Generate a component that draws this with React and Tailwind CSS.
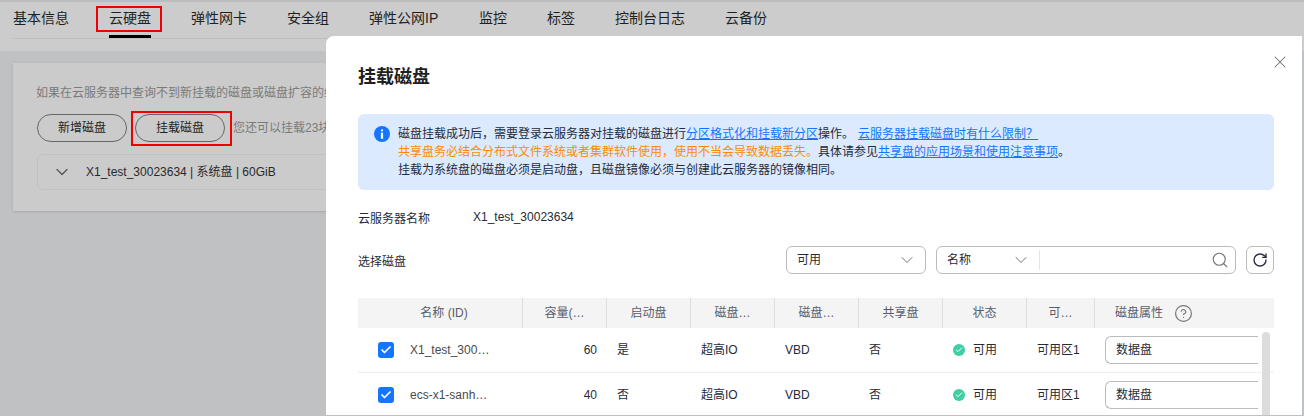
import { Check, ChevronDown, CircleHelp, RotateCw, Search, X } from 'lucide-react';

const FONT = { fontFamily: '"Liberation Sans", "Noto Sans CJK SC", sans-serif' };

const tabs = [
  { label: '基本信息', width: 'w-[96px]' },
  { label: '云硬盘', width: 'w-[82px]', active: true },
  { label: '弹性网卡', width: 'w-[96px]' },
  { label: '安全组', width: 'w-[82px]' },
  { label: '弹性公网IP', width: 'w-[110px]' },
  { label: '监控', width: 'w-[68px]' },
  { label: '标签', width: 'w-[68px]' },
  { label: '控制台日志', width: 'w-[110px]' },
  { label: '云备份', width: 'w-[82px]' },
];

const columns = [
  { label: '名称 (ID)', className: 'w-[165px] pl-2' },
  { label: '容量(…', className: 'w-[84px]' },
  { label: '启动盘', className: 'w-[84px]' },
  { label: '磁盘…', className: 'w-[84px]' },
  { label: '磁盘…', className: 'w-[84px]' },
  { label: '共享盘', className: 'w-[84px]' },
  { label: '状态', className: 'w-[84px]' },
  { label: '可…', className: 'w-[68px]' },
];

const disks = [
  { name: 'X1_test_300…', size: 60, boot: '是' },
  { name: 'ecs-x1-sanh…', size: 40, boot: '否' },
];

function DiskRow({ disk }) {
  return (
    <div className="flex h-[45px] items-center border-b border-[#eeeeee] text-xs text-[#252b3a]">
      <div className="flex w-[164px] items-center pl-5">
        <span className="flex h-4 w-4 items-center justify-center rounded-[3px] bg-[#1476ff]">
          <Check size={12} strokeWidth={3.5} className="text-white" />
        </span>
        <span className="ml-4 text-[#4a4a4a]">{disk.name}</span>
      </div>
      <div className="w-[84px] pr-[9px] text-right">{disk.size}</div>
      <div className="w-[84px] pl-[11px]">{disk.boot}</div>
      <div className="w-[84px] pl-[11px]">超高IO</div>
      <div className="w-[84px] pl-[11px]">VBD</div>
      <div className="w-[84px] pl-[11px]">否</div>
      <div className="flex w-[84px] items-center pl-[11px]">
        <span className="flex h-3 w-3 items-center justify-center rounded-full bg-[#3fcfa4]">
          <Check size={8} strokeWidth={3} className="text-white" />
        </span>
        <span className="ml-2">可用</span>
      </div>
      <div className="w-[68px] pl-[11px]">可用区1</div>
      <div className="w-[164px] pl-[11px]">
        <div className="flex h-7 w-[153px] items-center rounded-l-md border border-r-0 border-[#bbbbbb] pl-[10px]">数据盘</div>
      </div>
    </div>
  );
}

export default function App() {
  return (
    <div style={FONT} className="relative h-[416px] w-[1304px] overflow-hidden bg-[#c0c1c3]">
      {/* page behind the dialog */}
      <div className="h-[51px] border-t-2 border-[#bdbdbd] bg-[#cccccc] pl-[13px] pr-3">
        <div className="flex h-[37px] border-b border-[#bfbfbf]">
          {tabs.map((tab) => (
            <div key={tab.label} className={`${tab.width} shrink-0`}>
              <span className={`block h-[36px] w-fit pt-[6px] text-sm leading-5 text-[#1f1f1f] ${tab.active ? 'border-b-[3px] border-black' : ''}`}>{tab.label}</span>
            </div>
          ))}
        </div>
      </div>

      <div className="ml-[13px] mt-[12px] h-[148px] w-[400px] bg-[#cbcbcb] pl-6 pt-5 shadow-sm">
        <p className="-ml-px whitespace-nowrap text-xs leading-5 text-[#7a7a7a]">如果在云服务器中查询不到新挂载的磁盘或磁盘扩容的结果，请参考相关文档</p>
        <div className="mt-[11px] flex items-center">
          <span className="flex h-7 w-[90px] items-center justify-center rounded-full border border-[#666666] text-xs text-[#1f1f1f]">新增磁盘</span>
          <span className="ml-2 flex h-7 w-[90px] items-center justify-center rounded-full border border-[#666666] text-xs text-[#1f1f1f]">挂载磁盘</span>
          <span className="ml-2 whitespace-nowrap text-xs text-[#7a7a7a]">您还可以挂载23块磁盘</span>
        </div>
        <div className="mt-[12px] flex h-[36px] w-[360px] items-center rounded-md border border-[#c0c0c0] pl-[14px] text-xs text-[#2a2a2a]">
          <ChevronDown size={20} strokeWidth={1.5} className="text-[#555555]" />
          <span className="ml-[14px]">X1_test_30023634 | 系统盘 | 60GiB</span>
        </div>
      </div>

      {/* red annotation boxes */}
      <div className="absolute left-[96px] top-[6px] h-[26px] w-[66px] border-2 border-[#f00000]" />
      <div className="absolute left-[131px] top-[111px] h-[35px] w-[101px] border-2 border-[#f00000]" />

      {/* dialog */}
      <div className="absolute left-[326px] top-[36px] h-[379px] w-[976px] overflow-hidden rounded-tl-lg bg-white pl-8 pr-7">
        <X size={20} strokeWidth={1.25} className="absolute right-[12px] top-[16px] text-[#707070]" />
        <h2 className="pt-[27px] text-lg font-bold leading-[28px] text-[#1f1f1f]">挂载磁盘</h2>

        <div className="mt-[23px] flex h-[76px] w-[916px] rounded-md bg-[#dbeafe] pl-4 pt-[11px] text-xs leading-[18px] text-[#252b3a]">
          <svg viewBox="0 0 16 16" className="mt-[1px] h-4 w-4 shrink-0">
            <circle cx="8" cy="8" r="8" fill="#1476ff" />
            <rect x="6.9" y="3.2" width="2.2" height="2.2" rx="1.1" fill="#fff" />
            <rect x="6.9" y="6.6" width="2.2" height="6.2" fill="#fff" />
          </svg>
          <div className="ml-2 whitespace-nowrap">
            <p>
              磁盘挂载成功后，需要登录云服务器对挂载的磁盘进行<span className="text-[#1476ff] underline">分区格式化和挂载新分区</span>操作。<span className="ml-1 text-[#1476ff] underline">云服务器挂载磁盘时有什么限制？</span>
            </p>
            <p>
              <span className="text-[#ff8a00]">共享盘务必结合分布式文件系统或者集群软件使用，使用不当会导致数据丢失。</span>具体请参见<span className="text-[#1476ff] underline">共享盘的应用场景和使用注意事项</span>。
            </p>
            <p>挂载为系统盘的磁盘必须是启动盘，且磁盘镜像必须与创建此云服务器的镜像相同。</p>
          </div>
        </div>

        <div className="mt-[17px] flex text-xs leading-5 text-[#252b3a]">
          <span className="mt-[2px] w-[115px]">云服务器名称</span>
          <span>X1_test_30023634</span>
        </div>

        <div className="mt-[17px] flex h-7 items-center text-xs text-[#252b3a]">
          <span className="mt-[4px]">选择磁盘</span>
          <div className="ml-auto flex items-center">
            <div className="flex h-7 w-[140px] items-center justify-between rounded-md border border-[#bbbbbb] pl-[10px] pr-[8px]">
              <span>可用</span>
              <ChevronDown size={20} strokeWidth={1} className="text-[#555555]" />
            </div>
            <div className="ml-[10px] flex h-7 w-[300px] items-center rounded-md border border-[#bbbbbb] pl-[10px] pr-[6px]">
              <span>名称</span>
              <ChevronDown size={20} strokeWidth={1} className="ml-[40px] text-[#555555]" />
              <span className="ml-[8px] h-5 border-l border-[#e5e5e5]" />
              <Search size={18} strokeWidth={1.5} className="ml-auto text-[#777777]" />
            </div>
            <div className="ml-[10px] flex h-7 w-7 items-center justify-center rounded-md border border-[#bbbbbb]">
              <RotateCw size={16} strokeWidth={2} className="text-[#252b3a]" />
            </div>
          </div>
        </div>

        <div className="relative mt-[24px]">
          <div className="flex h-[30px] items-center bg-[#f4f4f4] text-xs text-[#575d6c]">
            {columns.map((col, i) => (
              <div key={i} className={`${col.className} flex h-full items-center justify-center border-r border-[#dfdfdf]`}>{col.label}</div>
            ))}
            <div className="flex items-center pl-5">
              磁盘属性
              <CircleHelp size={19} strokeWidth={1.5} className="ml-[11px] text-[#777777]" />
            </div>
          </div>
          {disks.map((disk) => (
            <DiskRow key={disk.name} disk={disk} />
          ))}
          <div className="absolute right-[4px] top-[34px] h-[90px] w-2 rounded-t bg-[#dcdcdc]" />
        </div>
      </div>
    </div>
  );
}
